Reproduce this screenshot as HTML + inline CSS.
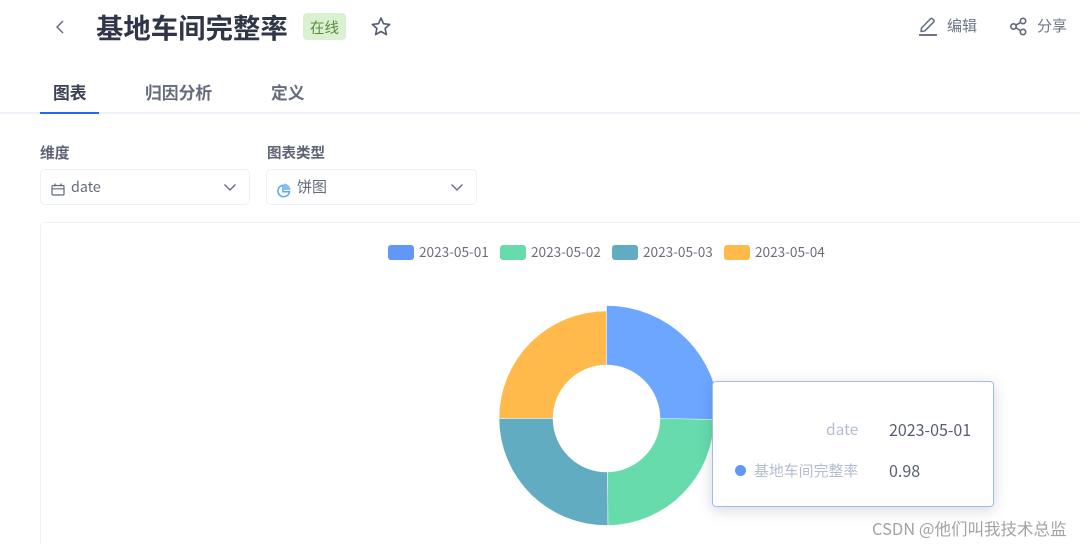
<!DOCTYPE html>
<html lang="zh">
<head>
<meta charset="utf-8">
<style>
html,body{margin:0;padding:0;background:#fff;width:1080px;height:544px;overflow:hidden;}
body{font-family:"Noto Sans CJK SC","Liberation Sans",sans-serif;}
#w{position:relative;width:1080px;height:544px;overflow:hidden;filter:blur(.3px);}
.a{position:absolute;white-space:nowrap;}
svg{position:absolute;display:block;overflow:visible;}
.sel{position:absolute;top:169px;height:34px;border:1px solid #edf0f7;border-radius:5px;background:#fff;}
</style>
</head>
<body>
<div id="w">
<svg style="left:0;top:0" width="80" height="50" viewBox="0 0 80 50"><path d="M63 21L57 27l6 6" fill="none" stroke="#5b6478" stroke-width="1.400"/></svg>
<div class="a" style="left:96px;top:8px;font-size:27.400px;line-height:36px;font-weight:700;color:#2f3648">基地车间完整率</div>
<div class="a" style="left:303px;top:13px;width:43px;height:27px;background:#d9f1d0;border-radius:4px;color:#5c8a3c;font-size:14.500px;line-height:29px;text-align:center">在线</div>
<svg style="left:371px;top:16px" width="20" height="20" viewBox="0 0 20 20"><path d="M10 2l2.500 5.700 6.200.7-4.600 4.100 1.300 6.100L10 15.500l-5.400 3.100 1.300-6.100-4.600-4.100 6.200-.7z" fill="none" stroke="#535c71" stroke-width="1.600" stroke-linejoin="round"/></svg>

<svg style="left:918px;top:16px" width="20" height="21" viewBox="0 0 20 21"><path d="M3 15.500L3.500 12 12.500 2.800a1.400 1.400 0 0 1 2 0l1.200 1.200a1.400 1.400 0 0 1 0 2L6.700 15z" fill="none" stroke="#6c7587" stroke-width="1.600" stroke-linejoin="round"/><path d="M1 19h18" stroke="#6c7587" stroke-width="1.900"/></svg>
<div class="a" style="left:947px;top:15px;font-size:15px;line-height:22px;color:#6c7587">编辑</div>
<svg style="left:1010px;top:18px" width="17" height="18" viewBox="0 0 17 18"><g fill="none" stroke="#5f687c" stroke-width="1.600"><circle cx="3.500" cy="8.500" r="2.700"/><circle cx="13" cy="3" r="2.700"/><circle cx="13" cy="14" r="2.700"/><path d="M5.800 7.200L10.700 4.300M5.800 9.800L10.700 12.700"/></g></svg>
<div class="a" style="left:1037px;top:15px;font-size:15px;line-height:22px;color:#6c7587">分享</div>

<div class="a" style="left:0;top:112px;width:1080px;height:2px;background:#edf1f8"></div>
<div class="a" style="left:40px;top:112px;width:59px;height:2px;background:#1f6af0"></div>
<div class="a" style="left:53px;top:81px;font-size:16.800px;line-height:22px;font-weight:700;color:#3b4254">图表</div>
<div class="a" style="left:145px;top:81px;font-size:16.800px;line-height:22px;font-weight:700;color:#636b7c">归因分析</div>
<div class="a" style="left:271px;top:81px;font-size:16.800px;line-height:22px;font-weight:700;color:#636b7c">定义</div>

<div class="a" style="left:40px;top:142px;font-size:14.800px;line-height:21px;font-weight:700;color:#5d6474">维度</div>
<div class="a" style="left:267px;top:142px;font-size:14.500px;line-height:21px;font-weight:700;color:#5d6474">图表类型</div>

<div class="sel" style="left:40px;width:208px"></div>
<svg style="left:51px;top:182.500px" width="14" height="13" viewBox="0 0 14 13"><g fill="none" stroke="#626a7b" stroke-width="1.200"><rect x="1" y="2.500" width="12" height="9.500" rx="1"/><path d="M1 5.800h12M4 .5v3M10 .5v3"/></g></svg>
<div class="a" style="left:71px;top:177px;font-size:14.300px;line-height:20px;color:#636b7b">date</div>
<svg style="left:223px;top:183px" width="14" height="9" viewBox="0 0 14 9"><path d="M1.500 1.500L7 7l5.500-5.500" fill="none" stroke="#5f687a" stroke-width="1.300"/></svg>

<div class="sel" style="left:266px;width:209px"></div>
<svg style="left:277px;top:183px" width="14" height="15" viewBox="0 0 14 15"><path d="M6 2.200a5.800 5.800 0 1 0 6.500 6.500H6z" fill="none" stroke="#5aa9ea" stroke-width="1.500"/><path d="M7 .6a6.500 6.500 0 0 1 6.500 6.500H7z" fill="#86bff0"/></svg>
<div class="a" style="left:297px;top:177px;font-size:15px;line-height:20px;color:#636b7b">饼图</div>
<svg style="left:450px;top:183px" width="14" height="9" viewBox="0 0 14 9"><path d="M1.500 1.500L7 7l5.500-5.500" fill="none" stroke="#5f687a" stroke-width="1.300"/></svg>

<div class="a" style="left:40px;top:222px;width:1060px;height:340px;border:1px solid #f0f2f7;border-radius:5px;background:#fff"></div>

<div class="a" style="left:388px;top:245px;width:26px;height:15px;background:#6198f7;border-radius:3px"></div>
<div class="a" style="left:419px;top:241px;font-size:13.600px;line-height:20px;color:#6b6f78">2023-05-01</div>
<div class="a" style="left:500px;top:245px;width:26px;height:15px;background:#67dbab;border-radius:3px"></div>
<div class="a" style="left:531px;top:241px;font-size:13.600px;line-height:20px;color:#6b6f78">2023-05-02</div>
<div class="a" style="left:612px;top:245px;width:26px;height:15px;background:#62acc1;border-radius:3px"></div>
<div class="a" style="left:643px;top:241px;font-size:13.600px;line-height:20px;color:#6b6f78">2023-05-03</div>
<div class="a" style="left:724px;top:245px;width:26px;height:15px;background:#ffba4b;border-radius:3px"></div>
<div class="a" style="left:755px;top:241px;font-size:13.600px;line-height:20px;color:#6b6f78">2023-05-04</div>

<svg style="left:0;top:0" width="1080" height="544" viewBox="0 0 1080 544">
<path d="M606.500 311A107.500 107.500 0 0 0 499 418.500H553A53.500 53.500 0 0 1 606.500 365Z" fill="#ffba4b" stroke="#fff" stroke-width=".5"/>
<path d="M499 418.500A107.500 107.500 0 0 0 608 525.500L607.500 472A53.500 53.500 0 0 1 553 418.500Z" fill="#62acc1" stroke="#fff" stroke-width=".5"/>
<path d="M608 525.500A107.500 107.500 0 0 0 714 419L660 418A53.500 53.500 0 0 1 607.500 472Z" fill="#67dbab" stroke="#fff" stroke-width=".5"/>
<path d="M606.500 305.500A113 113 0 0 1 719.500 419.500L660 418.500A53.500 53.500 0 0 0 606.500 365Z" fill="#6ca6ff" stroke="#fff" stroke-width=".5"/>
</svg>

<div class="a" style="left:712px;top:381px;width:280px;height:124px;background:#fff;border:1px solid #9dbdf8;border-radius:4px;box-shadow:0 3px 14px rgba(60,70,100,.22)"></div>
<div class="a" style="left:826px;top:419px;font-size:15.500px;line-height:21px;color:#b3bdd1">date</div>
<div class="a" style="left:889px;top:419px;font-size:16px;line-height:21px;color:#575e72">2023-05-01</div>
<div class="a" style="left:735px;top:465px;width:11px;height:11px;border-radius:50%;background:#6198f7"></div>
<div class="a" style="left:754px;top:460px;font-size:14.900px;line-height:21px;color:#b3bdd1">基地车间完整率</div>
<div class="a" style="left:889px;top:460px;font-size:16px;line-height:21px;color:#575e72">0.98</div>

<div class="a" style="left:872px;top:518px;font-size:16.500px;line-height:21px;color:#a3a3a3">CSDN @他们叫我技术总监</div>
</div>
</body>
</html>
